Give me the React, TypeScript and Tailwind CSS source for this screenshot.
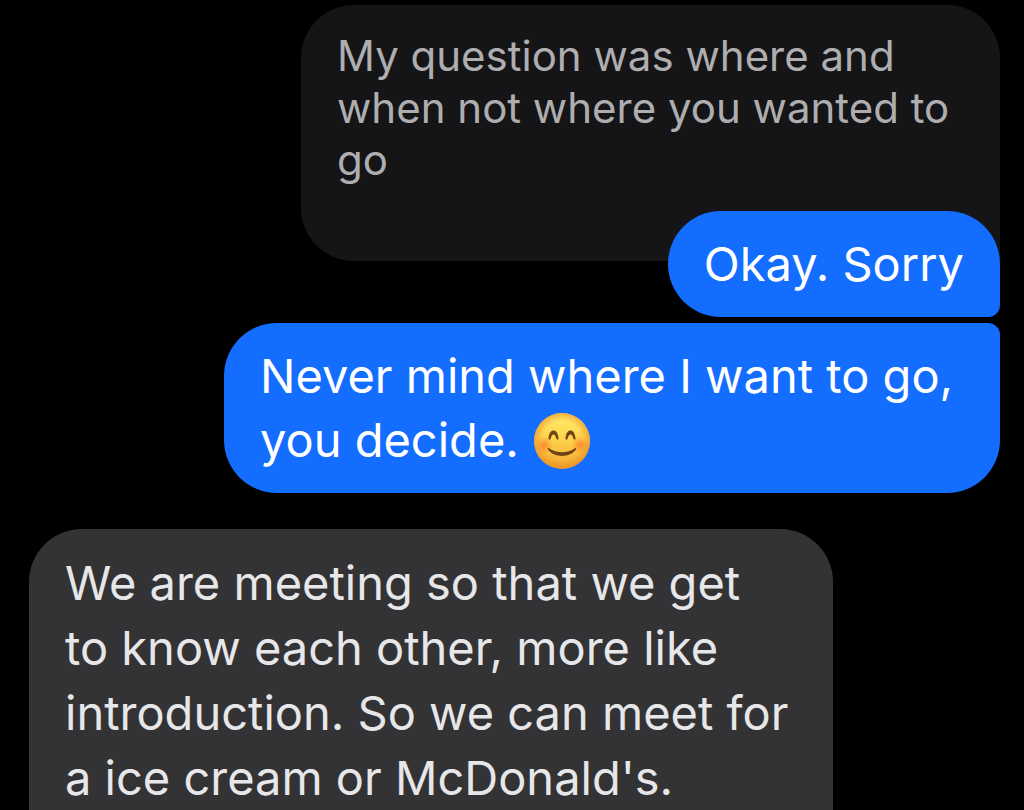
function Emoji() {
	return (
		<svg viewBox="0 0 56 56" className="ml-0.5 inline-block size-14 align-[-12px]" role="img" aria-label="Smiling face with smiling eyes">
			<defs>
				<linearGradient id="face" x1="0" y1="0" x2="0" y2="1">
					<stop offset="0" stopColor="#fff06e" />
					<stop offset="0.5" stopColor="#fdd04a" />
					<stop offset="1" stopColor="#f3a52f" />
				</linearGradient>
				<radialGradient id="edge">
					<stop offset="0.7" stopColor="#e8871e" stopOpacity="0" />
					<stop offset="1" stopColor="#e8871e" stopOpacity="0.6" />
				</radialGradient>
				<radialGradient id="blush">
					<stop offset="0" stopColor="#f9742c" stopOpacity="0.7" />
					<stop offset="1" stopColor="#f9742c" stopOpacity="0" />
				</radialGradient>
			</defs>
			<circle cx="28" cy="28" r="28" fill="url(#face)" />
			<circle cx="28" cy="28" r="28" fill="url(#edge)" />
			<circle cx="10" cy="32" r="9" fill="url(#blush)" />
			<circle cx="46" cy="32" r="9" fill="url(#blush)" />
			<g fill="#704214">
				<path d="M14.5 25.5C15 20 17 17.5 19.5 17.5S24 20 24.500 25.500C24.500 27 22.800 27 22.300 25.500C21.500 22.500 20.800 21.500 19.500 21.500S17.500 22.500 16.700 25.500C16.200 27 14.500 27 14.500 25.500Z" />
				<path d="M31.500 25.500C32 20 34 17.500 36.500 17.500S41 20 41.500 25.500C41.500 27 39.800 27 39.300 25.500C38.500 22.500 37.800 21.500 36.500 21.500S34.500 22.500 33.700 25.500C33.200 27 31.500 27 31.500 25.500Z" />
				<path d="M15 35.200C22.500 40.500 33.500 40.500 41 35.200C42 34.700 42.500 35.500 42 36.500C36 45 20 45 14 36.500C13.500 35.500 14 34.700 15 35.200Z" />
			</g>
		</svg>
	);
}

export default function App() {
	return (
		<main className="min-h-screen bg-black pt-[5px] pr-6 pl-[29px] font-['Inter',sans-serif] text-[47px] leading-16 text-white">
			<div className="flex flex-col items-end">
				{/* Quoted message, tucked under the reply */}
				<blockquote className="w-full max-w-[699px] rounded-[53px] rounded-br-none bg-[#151517] px-9 pt-[25px] pb-[75px] text-[42px] leading-[52px] text-[#aeaeb0]">
					My question was where and <br /> when not where you wanted to <br /> go
				</blockquote>
				<p className="relative -mt-[50px] rounded-[53px] rounded-br-xl bg-[#136dff] px-9 py-[21px]">Okay. Sorry</p>
				<p className="mt-1.5 w-full max-w-[776px] rounded-[53px] rounded-tr-xl bg-[#136dff] px-9 py-[21px]">
					Never mind where I want to go, <br /> you decide. <Emoji />
				</p>
			</div>
			<p className="mt-9 max-w-[804px] rounded-t-[53px] bg-[#333335] px-9 pt-[21px] leading-[65px] text-[#e7e7e9]">
				We are meeting so that we get <br /> to know each other, more like <br /> introduction. So we can meet for <br /> a ice cream or McDonald's.
			</p>
		</main>
	);
}
